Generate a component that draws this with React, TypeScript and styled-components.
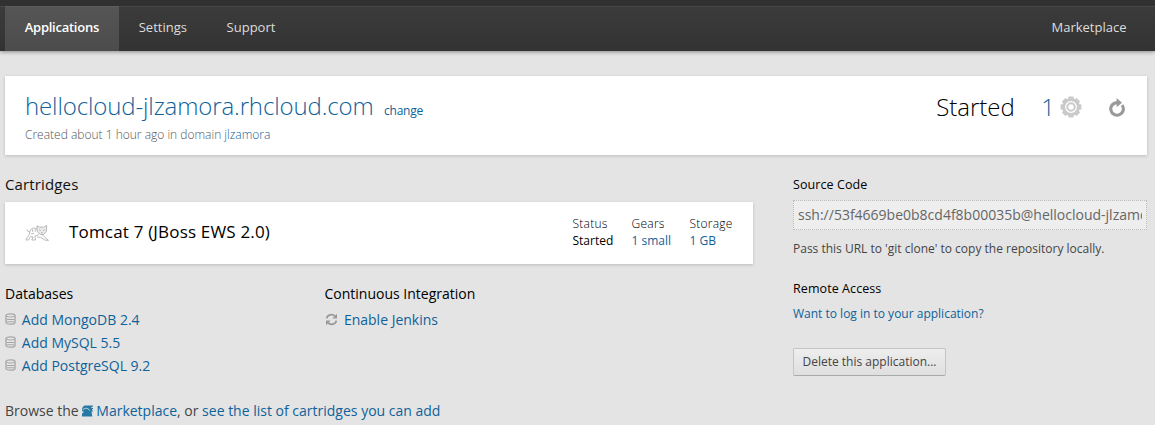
import React from "react";
import styled, { createGlobalStyle } from "styled-components";

const GlobalStyle = createGlobalStyle`
  * { box-sizing: border-box; }
  body {
    margin: 0;
    background: #e4e4e4;
    color: #444;
    font-family: "Open Sans", sans-serif;
    font-size: 14px;
    overflow: hidden;
  }
`;

const Page = styled.div`
  width: 1155px;
  height: 425px;
  overflow: hidden;
`;

const NavBar = styled.nav`
  display: flex;
  height: 51px;
  padding-left: 5px;
  border-top: 6px solid #313131;
  background: linear-gradient(#474747 0, #474747 1px, #3b3b3b 1px, #333 100%);
  box-shadow: 0 1px 4px rgba(0, 0, 0, 0.4);
`;

const NavItem = styled.a<{ $active?: boolean; $right?: boolean }>`
  height: 45px;
  padding: 0 20px 0 19.7px;
  margin-left: ${(p) => (p.$right ? "auto" : 0)};
  margin-right: ${(p) => (p.$right ? "8.5px" : 0)};
  line-height: 42px;
  font-size: 13px;
  font-weight: ${(p) => (p.$active ? 600 : 400)};
  letter-spacing: ${(p) => (p.$active ? "-0.25px" : "0")};
  color: ${(p) => (p.$active ? "#fff" : "#ddd")};
  background: ${(p) => (p.$active ? "linear-gradient(#646464 0, #555 1px, #4c4c4c)" : "none")};
`;

const Card = styled.section`
  display: flex;
  background: #fff;
  box-shadow: 0 1px 3px rgba(0, 0, 0, 0.18);
`;

const AppCard = styled(Card)`
  height: 79px;
  margin: 25px 8px 0 5px;
  padding: 14px 22px 0 20px;
  justify-content: space-between;
`;

const Link = styled.a`
  color: #0f6299;
`;

const AppTitle = styled.h1`
  margin: 0;
  height: 34px;
  line-height: 32px;
  font-size: 24px;
  font-weight: 300;
  letter-spacing: -0.12px;
  white-space: nowrap;
`;

const ChangeLink = styled(Link)`
  margin-left: 10.5px;
  font-size: 12px;
  font-weight: 400;
  letter-spacing: -0.25px;
`;

const Created = styled.p`
  margin: 0;
  line-height: 22px;
  font-size: 12px;
  font-weight: 300;
  color: #555;
`;

const AppStatus = styled.div`
  display: flex;
  align-items: center;
  height: 34px;
  font-size: 24px;
  line-height: 32px;
  font-weight: 300;
  color: #000;
`;

const GearCount = styled(Link)`
  display: flex;
  align-items: center;
  gap: 5px;
  margin: 0 27px 0 26.5px;
`;

const Columns = styled.div`
  display: flex;
  padding: 0 8px 0 5px;
`;

const Main = styled.main`
  width: 748px;
  margin-right: 40px;
`;

const Heading = styled.h2`
  margin: 0;
  padding-top: 18px;
  height: 47px;
  line-height: 22px;
  font-size: 15px;
  font-weight: 400;
  letter-spacing: 0.14px;
  color: #111;
`;

const CartridgeCard = styled(Card)`
  height: 62px;
  align-items: center;
  padding: 0 19.5px 0 20px;
`;

const CartridgeName = styled.h3`
  margin: 0 auto 3px 20px;
  font-size: 17px;
  font-weight: 400;
  letter-spacing: 0.18px;
  color: #000;
`;

const Stat = styled.div<{ $width: number }>`
  width: ${(p) => p.$width}px;
  margin-bottom: 2px;
  line-height: 17px;
  font-size: 12px;
  color: #000;
  white-space: nowrap;
`;

const StatLabel = styled.div`
  font-weight: 300;
  letter-spacing: 0.25px;
`;

const AddColumns = styled.div`
  display: flex;
  height: 136px;
  padding-top: 18px;
`;

const AddGroup = styled.div<{ $width: number }>`
  width: ${(p) => p.$width}px;
`;

const GroupTitle = styled.h3`
  margin: 0 0 2px;
  line-height: 24px;
  font-size: 14px;
  font-weight: 400;
  color: #000;
`;

const AddRow = styled.div<{ $gap: number }>`
  display: flex;
  align-items: center;
  gap: ${(p) => p.$gap}px;
  height: 23px;

  svg {
    margin-bottom: 1px;
  }
`;

const Browse = styled.p`
  margin: 0;
  line-height: 22px;
  white-space: nowrap;
`;

const Side = styled.aside`
  width: 354px;
  font-size: 12px;
`;

const SideTitle = styled.h3`
  margin: 0;
  line-height: 20px;
  font-size: 12.5px;
  font-weight: 400;
  letter-spacing: 0.08px;
  color: #000;
`;

const SourceTitle = styled(SideTitle)`
  padding-top: 20px;
  height: 45px;
`;

const RepoUrl = styled.div`
  height: 30px;
  padding: 0 4px;
  border: 1px dotted #bbb;
  background: #eee;
  font-size: 14px;
  line-height: 28px;
  color: #666;
`;

const RepoText = styled.div`
  overflow: hidden;
  white-space: nowrap;
`;

const SideNote = styled.p<{ $top: number; $bottom: number }>`
  margin: 0;
  padding: ${(p) => p.$top}px 0 ${(p) => p.$bottom}px;
  line-height: 20px;
`;

const DeleteButton = styled.button`
  display: block;
  width: 153px;
  height: 28px;
  padding: 0 0 1px;
  border: 1px solid #c4c4c4;
  border-bottom-color: #aaa;
  border-radius: 2px;
  background: linear-gradient(#eee, #dfdfdf);
  font-family: inherit;
  font-size: 12px;
  color: #444;
`;

const MarketSvg = styled.svg`
  margin: 0 2px 0 -1px;
  vertical-align: -1px;
`;

const GearIcon = () => (
  <svg width="22" height="22" viewBox="-11 -11 22 22">
    <g fill="#cacaca">
      {[0, 45, 90, 135, 180, 225, 270, 315].map((a) => (
        <path key={a} transform={`rotate(${a})`} d="M-3 -7 L-2.5 -10.4 H2.5 L3 -7 Z" />
      ))}
    </g>
    <circle r="7.4" fill="none" stroke="#cacaca" strokeWidth="3" />
    <circle r="3.7" fill="none" stroke="#cacaca" strokeWidth="2" />
  </svg>
);

const RestartIcon = () => (
  <svg width="16" height="19" viewBox="0 0 16 19">
    <path d="M8.5 4.6 A6.3 6.3 0 1 0 13.1 7.1" fill="none" stroke="#999" strokeWidth="3.1" />
    <path d="M7.6 0 L13 4.7 L7.6 9.2 Z" fill="#999" />
  </svg>
);

const TomcatIcon = () => (
  <svg width="24" height="17" viewBox="0 0 24 17" fill="none" stroke="#aaa" strokeWidth="0.8">
    <path d="M12 4 C8.5 2 5 3.2 4.8 7.5 C4.8 10 2 12 1 15 H3.5 L5.5 11.5 L8 12 L6.8 15 H10.5 L9.8 11 C12 10.5 13.5 10 14 9.2" />
    <path d="M12 .8 L14.5 2.2 H18.5 L21.8 .6 L21.3 6.5 L18.5 9.5 H15.5 L12.2 6.5 Z" fill="#ececec" />
    <path d="M17.5 9.8 L20 12.5 L23.5 15.3 H20.5 L15.5 12.3 L12 12 M4.8 7 L2.5 6 L2 4.5" />
    <path d="M14 4.8 L15.8 5.5 M18 5.5 L19.8 4.8 M16 7.8 H18 M7 4 L8 7 M10 3.8 L10.5 6.5 M6 9 L9 8.5" />
  </svg>
);

const DatabaseIcon = () => (
  <svg width="12" height="12" viewBox="0 0 12 12" fill="none" stroke="#a4a4a4">
    <path d="M1 2.6 C1 .3 10 .3 10 2.6 V9.4 C10 11.7 1 11.7 1 9.4 Z" fill="#e6e6e6" strokeWidth="1.3" />
    <path d="M1.5 3 C3 4.4 8 4.4 9.5 3 M2 6.5 H9 M2 8.8 H9" />
  </svg>
);

const RefreshIcon = () => (
  <svg width="13" height="13" viewBox="0 0 13 13">
    <path d="M1.6 5.4 C2.4 1.4 7.6 .6 10 3.3 M11.4 7.6 C10.6 11.6 5.4 12.4 3 9.7" fill="none" stroke="#999" strokeWidth="1.8" />
    <path d="M12 .8 V5.4 H7.4 Z M1 12.2 V7.6 H5.6 Z" fill="#999" />
  </svg>
);

const MarketIcon = () => (
  <MarketSvg width="13" height="12" viewBox="0 0 13 12">
    <path d="M3.5 .5 H12 V1.8 H10.5 V3 H12 V4.2 H11 V5.5 H12 V6.6 H10.5 L11.3 11.5 H1 V8.8 L3 6.8 L1 6.2 C.8 3.5 1.5 1.5 3.5 .5 Z" fill="#2878a4" />
    <path d="M1.5 5.2 C4 2.4 7.2 2.8 8.6 5.6" fill="none" stroke="#e4e4e4" strokeWidth=".9" />
  </MarketSvg>
);

const databases = ["Add MongoDB 2.4", "Add MySQL 5.5", "Add PostgreSQL 9.2"];

export default function App() {
  return (
    <Page>
      <GlobalStyle />
      <NavBar>
        <NavItem $active>Applications</NavItem>
        <NavItem>Settings</NavItem>
        <NavItem>Support</NavItem>
        <NavItem $right>Marketplace</NavItem>
      </NavBar>
      <AppCard>
        <div>
          <AppTitle>
            <Link>hellocloud-jlzamora.rhcloud.com</Link>
            <ChangeLink>change</ChangeLink>
          </AppTitle>
          <Created>
            Created about 1 hour ago in domain <Link>jlzamora</Link>
          </Created>
        </div>
        <AppStatus>
          <span>Started</span>
          <GearCount>
            <span>1</span>
            <GearIcon />
          </GearCount>
          <RestartIcon />
        </AppStatus>
      </AppCard>
      <Columns>
        <Main>
          <Heading>Cartridges</Heading>
          <CartridgeCard>
            <TomcatIcon />
            <CartridgeName>Tomcat 7 (JBoss EWS 2.0)</CartridgeName>
            <Stat $width={59}>
              <StatLabel>Status</StatLabel>
              Started
            </Stat>
            <Stat $width={58}>
              <StatLabel>Gears</StatLabel>
              <Link>1 small</Link>
            </Stat>
            <Stat $width={44}>
              <StatLabel>Storage</StatLabel>
              <Link>1 GB</Link>
            </Stat>
          </CartridgeCard>
          <AddColumns>
            <AddGroup $width={319.5}>
              <GroupTitle>Databases</GroupTitle>
              {databases.map((name) => (
                <AddRow key={name} $gap={4.8}>
                  <DatabaseIcon />
                  <Link>{name}</Link>
                </AddRow>
              ))}
            </AddGroup>
            <AddGroup $width={300}>
              <GroupTitle>Continuous Integration</GroupTitle>
              <AddRow $gap={6.4}>
                <RefreshIcon />
                <Link>Enable Jenkins</Link>
              </AddRow>
            </AddGroup>
          </AddColumns>
          <Browse>
            Browse the{" "}
            <Link>
              <MarketIcon />
              Marketplace
            </Link>
            , or <Link>see the list of cartridges you can add</Link>
          </Browse>
        </Main>
        <Side>
          <SourceTitle>Source Code</SourceTitle>
          <RepoUrl>
            <RepoText>ssh://53f4669be0b8cd4f8b00035b@hellocloud-jlzamora.rhcloud.com/~/git/hellocloud.git/</RepoText>
          </RepoUrl>
          <SideNote $top={9} $bottom={20}>
            Pass this URL to 'git clone' to copy the repository locally.
          </SideNote>
          <SideTitle>Remote Access</SideTitle>
          <SideNote $top={5} $bottom={24}>
            <Link>Want to log in to your application?</Link>
          </SideNote>
          <DeleteButton>Delete this application...</DeleteButton>
        </Side>
      </Columns>
    </Page>
  );
}
